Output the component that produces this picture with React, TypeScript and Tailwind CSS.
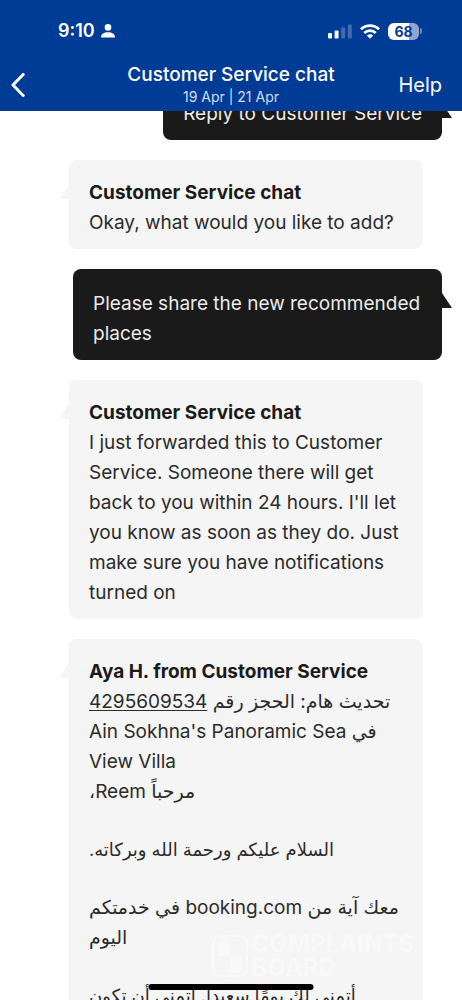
import type { ReactNode } from "react";

const Tail = ({ side }: { side: "left" | "right" }) => (
  <svg
    aria-hidden="true"
    viewBox="0 0 10 15"
    className={
      side === "left"
        ? "absolute top-6 right-full h-[15px] w-[10px] text-[#f5f5f5]"
        : "absolute top-6 left-full h-[15px] w-[10px] text-[#1a1a1a]"
    }
  >
    <path d={side === "left" ? "M10 0v15H0z" : "M0 0v15h10z"} fill="currentColor" />
  </svg>
);

const AgentMessage = ({ name, children }: { name: string; children: ReactNode }) => (
  <li className="relative mr-[19px] rounded-lg bg-[#f5f5f5] px-5 pt-[18px] pb-[11px] text-[#2b2b2b]">
    <Tail side="left" />
    <h2 className="font-bold text-[#1a1a1a]">{name}</h2>
    {children}
  </li>
);

const GuestMessage = ({ children }: { children: ReactNode }) => (
  <li className="relative ml-1 w-fit self-end rounded-lg bg-[#1a1a1a] px-5 pt-5 pb-[11px] text-[#ececec]">
    <Tail side="right" />
    <p>{children}</p>
  </li>
);

const StatusBar = () => (
  <div className="flex items-center justify-between pr-10 pl-[58px]">
    <div className="flex items-center gap-[6px] text-[18px] leading-6 font-semibold">
      <span>9:10</span>
      <svg aria-hidden="true" viewBox="0 0 14 14" className="size-[14px]" fill="currentColor">
        <circle cx="7" cy="3.4" r="3.3" />
        <path d="M.5 13.6c-.4 0-.5-.3-.5-.7C.2 9.800 3 8.200 7 8.200s6.800 1.600 7 4.700c0 .4-.1.7-.5.7z" />
      </svg>
    </div>
    <div className="flex items-center gap-2">
      <svg aria-hidden="true" viewBox="0 0 24 16" className="h-4 w-6" fill="currentColor">
        <rect x="0" y="10" width="4" height="5.500" rx="1" />
        <rect x="6.600" y="7.500" width="4" height="8" rx="1" />
        <rect x="13.200" y="4.500" width="4" height="11" rx="1" opacity=".25" />
        <rect x="19.800" y="1.500" width="4" height="14" rx="1" opacity=".25" />
      </svg>
      <svg aria-hidden="true" viewBox="0 0 20 15" className="h-[15px] w-5">
        <g fill="none" stroke="currentColor" strokeWidth="2.800">
          <path d="M1 5.300a13 13 0 0 1 18 0" />
          <path d="M4.300 8.900a8.200 8.200 0 0 1 11.400 0" />
        </g>
        <path d="M10 14.800 6.800 11.600a4.600 4.600 0 0 1 6.400 0z" fill="currentColor" />
      </svg>
      <div className="flex items-center gap-px">
        <div className="flex h-[17px] w-[31px] items-center justify-center rounded-md bg-linear-to-r from-white from-68% to-[#8fa6d3] to-68% text-[14px] leading-[17px] font-bold text-[#003b95]">
          68
        </div>
        <span className="h-[6px] w-[2px] rounded-r-full bg-[#6f8dc4]" />
      </div>
    </div>
  </div>
);

const Header = () => (
  <header className="relative z-10 shrink-0 bg-[#003b95] pt-[19px] pb-1 text-white">
    <StatusBar />
    <div className="mt-5 grid grid-cols-[1fr_auto_1fr] items-center">
      <button type="button" aria-label="Back" className="ml-[11px] w-fit">
        <svg aria-hidden="true" viewBox="0 0 14 24" className="h-6 w-[14px]">
          <path
            d="M12.200 1.500 2 12l10.200 10.500"
            fill="none"
            stroke="currentColor"
            strokeWidth="3"
            strokeLinecap="round"
            strokeLinejoin="round"
          />
        </svg>
      </button>
      <div className="text-center">
        <h1 className="text-[19px] leading-6 font-medium">Customer Service chat</h1>
        <p className="text-[14px] leading-5 text-[#d5dff0]">19 Apr | 21 Apr</p>
      </div>
      <a href="#help" className="mr-5 justify-self-end text-[20px] leading-6">
        Help
      </a>
    </div>
  </header>
);

const Watermark = () => (
  <div className="pointer-events-none absolute right-12 bottom-5 flex items-center gap-1 text-white opacity-40">
    <svg aria-hidden="true" viewBox="0 0 36 42" className="h-[42px] w-9">
      <rect x="1" y="1" width="34" height="40" rx="8" fill="none" stroke="currentColor" strokeWidth="2" />
      <path d="M6 12a6 6 0 0 1 12 0v9H6zM18 21h12v8a6 6 0 0 1-12 6z" fill="currentColor" />
    </svg>
    <p className="text-[24px] leading-6 font-bold">
      COMPLAINTS
      <br />
      BOARD
    </p>
  </div>
);

export default function App() {
  return (
    <div className="relative flex h-screen flex-col overflow-hidden bg-white font-['Inter','DejaVu_Sans',sans-serif]">
      <Header />
      <main className="min-h-0 flex-1 overflow-hidden">
        {/* thread is scrolled part way through the first bubble */}
        <ul className="-mt-8 flex flex-col gap-5 pr-5 pl-[69px] text-[19px] leading-[30px]">
          <GuestMessage>Reply to Customer Service</GuestMessage>
          <AgentMessage name="Customer Service chat">
            <p>Okay, what would you like to add?</p>
          </AgentMessage>
          <GuestMessage>Please share the new recommended places</GuestMessage>
          <AgentMessage name="Customer Service chat">
            <p>
              I just forwarded this to Customer Service. Someone there will get back to you within
              24 hours. I'll let you know as soon as they do. Just make sure you have notifications
              turned on
            </p>
          </AgentMessage>
          <AgentMessage name="Aya H. from Customer Service">
            <div dir="rtl" lang="ar" className="space-y-7 text-left">
              <p>
                تحديث هام: الحجز رقم{" "}
                <a href="#booking" className="underline underline-offset-2">
                  4295609534
                </a>
                <br />
                في Ain Sokhna's Panoramic Sea
                <br />
                View Villa
                <br />
                مرحباً Reem،
              </p>
              <p className="text-[18px]/[30px]">السلام عليكم ورحمة الله وبركاته.</p>
              <p>
                معك آية من booking.com في خدمتكم
                <br />
                اليوم
              </p>
              <p className="text-[18px]/[30px]">أتمنى لك يومًا سعيدا. اتمنى أن تكون</p>
            </div>
          </AgentMessage>
        </ul>
      </main>
      <Watermark />
      <div className="absolute bottom-[10px] left-1/2 h-[6px] w-[165px] -translate-x-1/2 rounded-full bg-black" />
    </div>
  );
}
